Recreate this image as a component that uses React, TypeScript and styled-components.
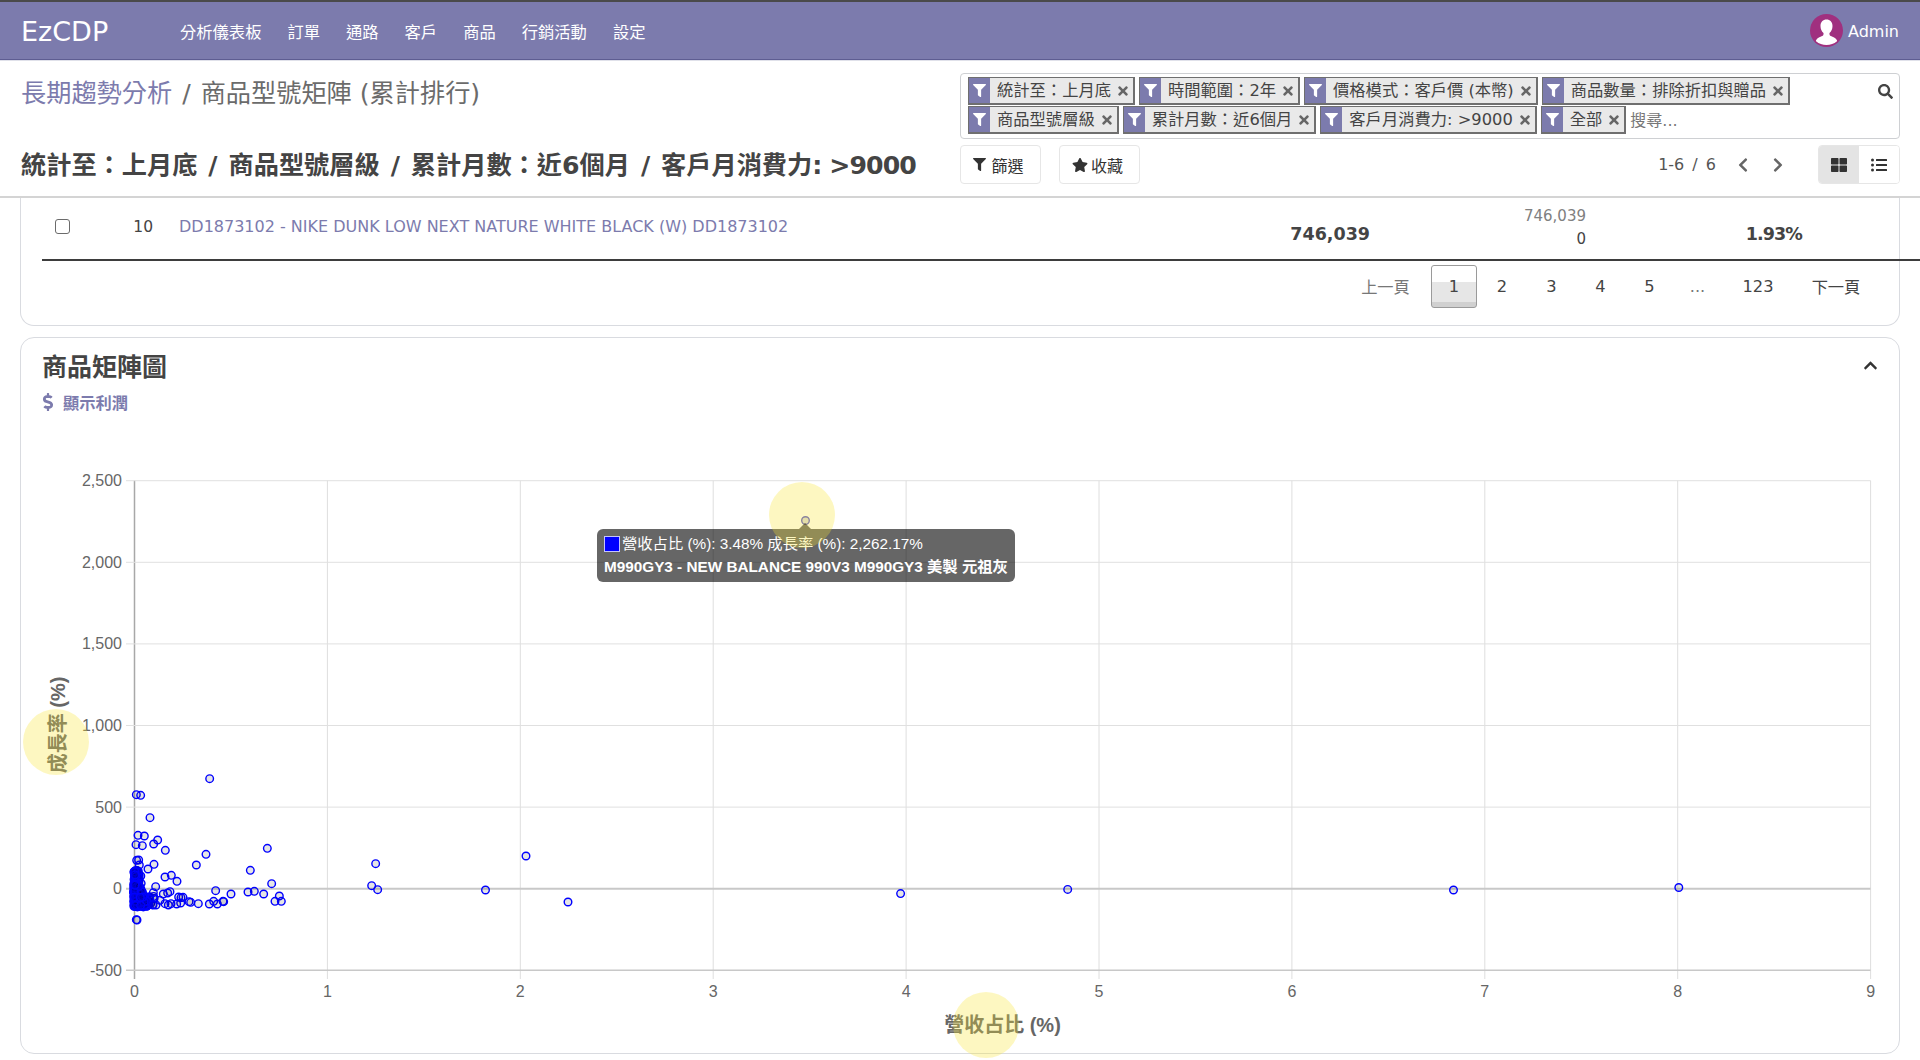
import React from "react";
import styled, { createGlobalStyle } from "styled-components";
import { FaFilter, FaTimes, FaSearch, FaStar, FaThLarge, FaListUl, FaChevronLeft, FaChevronRight, FaChevronUp, FaDollarSign } from "react-icons/fa";

const UI = `"DejaVu Sans", "Noto Sans CJK TC", sans-serif`;
const CHART = `"Liberation Sans", "Noto Sans CJK TC", sans-serif`;
const BRAND = "#7c7bad";

const Global = createGlobalStyle`
  html, body { margin: 0; padding: 0; background: #fff; }
  body { font-family: ${UI}; color: #444; }
  * { box-sizing: border-box; }
`;

const Page = styled.div`
  position: relative;
  width: 1920px;
  height: 1060px;
  overflow: hidden;
  display: flex;
  flex-direction: column;
  background: #fff;
`;

const Nav = styled.header`
  flex: none;
  height: 60px;
  display: flex;
  align-items: center;
  background: ${BRAND};
  border-top: 2px solid #4a4a4a;
  border-bottom: 1px solid #5e5d92;
  box-shadow: 0 1px 0 #e0e1ea;
  padding: 0 21px;
  color: #fff;
`;

const Brand = styled.div`
  font-size: 27px;
  line-height: 1;
  width: 159px;
  margin-top: 2px;
`;

const Menu = styled.nav`
  display: flex;
  gap: 26px;
  font-size: 16.3px;
  flex: 1;
`;

const UserBox = styled.div`
  display: flex;
  align-items: center;
  gap: 5px;
  font-size: 16px;
`;

const UserName = styled.span`
  margin-top: 2px;
`;

const Panel = styled.section`
  flex: none;
  height: 138px;
  display: grid;
  grid-template-columns: 939px 940px;
  padding: 13px 20px 0 21px;
  border-bottom: 2px solid #d4d4d4;
`;

const Heads = styled.div`
  display: flex;
  flex-direction: column;
  margin-top: 1px;
`;

const Crumbs = styled.div`
  font-size: 25.2px;
  line-height: 40px;
  color: #6b6b6b;
`;

const CrumbLink = styled.span`
  color: ${BRAND};
`;

const Sep = styled.span<{ $m: number }>`
  margin: 0 ${(p) => p.$m}px;
`;

const Title = styled.h1`
  margin: 32px 0 0;
  font-size: 25.2px;
  line-height: 40px;
  font-weight: 700;
  color: #444;
  white-space: nowrap;
`;

const TightLatin = styled.span`
  letter-spacing: -0.9px;
`;

const Controls = styled.div`
  display: flex;
  flex-direction: column;
`;

const SearchBox = styled.div`
  position: relative;
  height: 66px;
  border: 1px solid #ced0d3;
  border-radius: 4px;
  padding: 3px 7px;
  display: flex;
  flex-wrap: wrap;
  align-content: flex-start;
  gap: 1px 4px;
`;

const Facet = styled.div`
  height: 28px;
  display: flex;
  align-items: stretch;
  border: 1px solid #6f6f6f;
  border-width: 1px 2px 2px 1px;
  background: #e9e9e9;
  color: #444;
  font-size: 16.3px;
  line-height: 25px;
  white-space: nowrap;
`;

const FacetIcon = styled.span`
  width: 21px;
  display: flex;
  align-items: center;
  justify-content: center;
  background: ${BRAND};
  color: #fff;
  font-size: 13px;
`;

const FacetLabel = styled.span`
  padding: 0 5px 0 7px;
`;

const FacetClose = styled.span`
  display: flex;
  align-items: center;
  color: #666;
  font-size: 14px;
  padding-right: 3px;
`;

const SearchInput = styled.span`
  font-size: 16px;
  line-height: 30px;
  color: #777;
`;

const SearchGlyph = styled.span`
  position: absolute;
  right: 6px;
  top: 10px;
  font-size: 15px;
  color: #444;
  display: flex;
`;

const ControlRow = styled.div`
  margin-top: 6px;
  display: flex;
  align-items: center;
`;

const Button = styled.div<{ $gap: number }>`
  height: 39px;
  width: 81px;
  display: flex;
  align-items: center;
  justify-content: center;
  gap: ${(p) => p.$gap}px;
  margin-right: 18px;
  padding-right: 4px;
  border: 1px solid #e6e6e6;
  border-radius: 4px;
  font-size: 16px;
  color: #333;
`;

const Pager = styled.div`
  margin-left: auto;
  display: flex;
  align-items: center;
  font-size: 16px;
  word-spacing: 3px;
  color: #555;
  margin-right: 32px;
`;

const PagerArrow = styled.span<{ $gap: number }>`
  display: flex;
  color: #666;
  font-size: 16px;
  margin-left: ${(p) => p.$gap}px;
`;

const Toggle = styled.div`
  display: flex;
  height: 39px;
  border: 1px solid #e6e6e6;
  border-radius: 4px;
  overflow: hidden;
`;

const ToggleCell = styled.span<{ $active?: boolean }>`
  width: 40px;
  display: flex;
  align-items: center;
  justify-content: center;
  font-size: 16px;
  color: #333;
  background: ${(p) => (p.$active ? "#e4e4e4" : "#fff")};
`;

const Content = styled.main`
  flex: 1;
  min-height: 0;
  padding: 0 20px;
`;

const TableCard = styled.section`
  height: 128px;
  border: 1px solid #d9dbe0;
  border-top: 0;
  border-radius: 0 0 14px 14px;
  padding: 0 0 0 21px;
`;

const Row = styled.div`
  width: 1878px;
  height: 63px;
  display: grid;
  grid-template-columns: 70px 41px 1000px 217px 216px 216px 1fr;
  align-items: center;
  border-bottom: 2px solid #3d3d3d;
`;

const CheckCell = styled.div`
  padding-left: 13px;
  margin-top: -5px;
  display: flex;
`;

const Check = styled.span`
  width: 15px;
  height: 15px;
  border: 1px solid #6b6b6b;
  border-radius: 3px;
  background: #fff;
`;

const Rank = styled.div`
  text-align: right;
  font-size: 15.5px;
  color: #444;
  margin-top: -4px;
`;

const ProductLink = styled.div`
  padding-left: 26px;
  font-size: 16px;
  color: ${BRAND};
  margin-top: -4px;
  white-space: nowrap;
`;

const Strong = styled.div<{ $tight?: boolean }>`
  text-align: right;
  font-size: 17.5px;
  font-weight: 700;
  letter-spacing: ${(p) => (p.$tight ? "-0.9px" : "0")};
  color: #444;
  margin-top: 10px;
`;

const Stack = styled.div`
  text-align: right;
  display: flex;
  flex-direction: column;
  font-size: 15px;
  line-height: 23px;
  color: #444;
  margin-top: -2px;
`;

const Muted = styled.span`
  color: #808080;
`;

const PagerRow = styled.div`
  display: flex;
  align-items: center;
  justify-content: flex-end;
  height: 46px;
  margin-top: 2px;
  padding-right: 22px;
`;

const PageItem = styled.span<{ $w: number; $active?: boolean; $muted?: boolean }>`
  width: ${(p) => p.$w}px;
  height: 43px;
  display: flex;
  align-items: center;
  justify-content: center;
  font-size: 16.25px;
  color: ${(p) => (p.$muted ? "#777" : "#444")};
  ${(p) =>
    p.$active
      ? `border: 1px solid #9a9a9a; border-radius: 3px;
         background: linear-gradient(#fff 0, #fff 40%, #e6e6e6 40%, #e6e6e6 88%, #d0d0d0 88%);`
      : ""}
`;

const ChartCard = styled.section`
  position: relative;
  margin-top: 11px;
  height: 717px;
  border: 1px solid #d9dbe0;
  border-radius: 14px;
`;

const CardHead = styled.div`
  height: 93px;
  padding: 12px 21px 0;
  display: grid;
  grid-template-columns: 1fr auto;
  grid-template-rows: auto auto;
  align-content: start;
`;

const CardTitle = styled.h2`
  margin: 0;
  font-size: 25px;
  line-height: 36px;
  font-weight: 700;
  color: #444;
`;

const Collapse = styled.span`
  font-size: 15px;
  color: #333;
  display: flex;
  padding-top: 8px;
`;

const ProfitToggle = styled.div`
  grid-column: 1 / -1;
  display: flex;
  align-items: center;
  gap: 6px;
  margin-left: -3px;
  font-size: 16.25px;
  font-weight: 600;
  color: ${BRAND};
  margin-top: 4px;
`;

const ChartFrame = styled.div`
  position: relative;
  width: 1878px;
  height: 622px;
`;

const ChartSvg = styled.svg`
  display: block;
  width: 1878px;
  height: 622px;
  font-family: ${CHART};
`;

const Tooltip = styled.div`
  position: absolute;
  left: 576px;
  top: 98px;
  width: 418px;
  height: 53px;
  padding: 3px 7px;
  border-radius: 6px;
  background: rgba(0, 0, 0, 0.6);
  color: #fff;
  font-family: ${CHART};
  font-size: 15.3px;
  line-height: 23px;
  white-space: nowrap;
  &::before {
    content: "";
    position: absolute;
    left: 202px;
    top: -6px;
    border: 6px solid transparent;
    border-top: 0;
    border-bottom-color: rgba(0, 0, 0, 0.6);
  }
`;

const TipLine = styled.div`
  display: flex;
  align-items: center;
  gap: 2px;
`;

const TipSwatch = styled.span`
  width: 16px;
  height: 16px;
  background: #0000ff;
  border: 1px solid #c4c4ff;
`;

const TipStrong = styled.div`
  font-weight: 700;
`;

const Highlight = styled.span<{ $x: number; $y: number }>`
  position: absolute;
  left: ${(p) => p.$x - 33}px;
  top: ${(p) => p.$y - 33}px;
  width: 66px;
  height: 66px;
  border-radius: 50%;
  background: rgba(250, 230, 50, 0.3);
  pointer-events: none;
`;

const MENU = ["分析儀表板", "訂單", "通路", "客戶", "商品", "行銷活動", "設定"];
const ROW1 = ["統計至：上月底", "時間範圍：2年", "價格模式：客戶價 (本幣)", "商品數量：排除折扣與贈品"];
const ROW2 = ["商品型號層級", "累計月數：近6個月", "客戶月消費力: >9000", "全部"];

const X0 = 134.5;
const XU = 192.9;
const Y0 = 887.7;
const YU = 81.6;
const YTICKS = [2500, 2000, 1500, 1000, 500, 0, -500];
const XTICKS = [0, 1, 2, 3, 4, 5, 6, 7, 8, 9];
const yOf = (v: number) => Y0 - (v / 500) * YU;
const xOf = (v: number) => X0 + v * XU;

const ZOOM_POINTS: [number, number][] = [
  [569,53],[349,101],[362,103],[390,170],[354,223],[373,225],[348,251],[367,254],[401,249],[413,237],
  [436,268],[350,298],[356,297],[358,312],[402,310],[384,324],[558,280],[529,312],[742,262],[691,328],
  [435,348],[454,343],[471,361],[407,377],[755,368],[587,389],[684,393],[703,391],[731,399],[633,399],
  [778,405],[765,421],[784,421],[568,429],[581,421],[592,429],[609,421],[611,422],[535,428],[507,422],
  [512,424],[483,410],[476,408],[489,409],[482,426],[470,429],[450,392],[443,396],[430,399],[420,418],
  [435,428],[445,432],[453,428],[408,432],[398,431],[400,395],[1067,308],[1055,374],[1073,386],[349,476],[351,477],
];
const FAR_POINTS: [number, number][] = [
  [485.5,889],[526,855],[568,901],[900.6,892.6],[1067.7,888.4],[1453.5,889],[1678.8,886.5],
];

function cluster(): [number, number][] {
  const pts: [number, number][] = [];
  let seed = 17;
  const rnd = () => {
    seed = (seed * 1103515245 + 12345) % 2147483648;
    return seed / 2147483648;
  };
  for (let i = 0; i < 190; i++) {
    const r = rnd();
    const zy = r < 0.25 ? 325 + rnd() * 50 : 370 + rnd() * 66;
    const spread = zy < 370 ? 24 : (zy - 370) * 0.55 + 16;
    pts.push([342 + rnd() * rnd() * spread, zy]);
  }
  for (let i = 0; i < 30; i++) pts.push([345 + rnd() * 60, 405 + rnd() * 30]);
  for (let i = 0; i < 260; i++) {
    const zy = 368 + rnd() * 70;
    const reach = 14 + ((zy - 368) / 70) * 34;
    pts.push([341 + rnd() * reach, zy]);
  }
  return pts;
}

const ALL_POINTS: [number, number][] = [
  ...cluster().map(([x, y]): [number, number] => [20 + x / 3, 760 + y / 3]),
  ...ZOOM_POINTS.map(([x, y]): [number, number] => [20 + x / 3, 760 + y / 3]),
  ...FAR_POINTS,
];

function Chart() {
  return (
    <ChartSvg viewBox="21 430 1878 622">
      {XTICKS.map((t) => (
        <line key={t} x1={xOf(t)} x2={xOf(t)} y1={479.5} y2={978} stroke={t === 0 ? "#a8a8a8" : "#dedede"} strokeWidth={t === 0 ? 1.5 : 1} />
      ))}
      {YTICKS.map((t) => (
        <line
          key={t}
          x1={126}
          x2={1870.5}
          y1={yOf(t)}
          y2={yOf(t)}
          stroke={t === 0 || t === -500 ? "#c8c8c8" : "#e0e0e0"}
          strokeWidth={t === 0 ? 2 : t === -500 ? 1.5 : 1}
        />
      ))}
      {YTICKS.map((t) => (
        <text key={t} x={122} y={yOf(t) + 5.5} textAnchor="end" fontSize={16} fill="#666">
          {t.toLocaleString("en-US")}
        </text>
      ))}
      {XTICKS.map((t) => (
        <text key={t} x={xOf(t)} y={996} textAnchor="middle" fontSize={16} fill="#666">
          {t}
        </text>
      ))}
      <text x={1002.5} y={1031} textAnchor="middle" fontSize={20} fontWeight={700} fill="#666">
        營收占比 (%)
      </text>
      <text transform="translate(65 724) rotate(-90)" textAnchor="middle" fontSize={20} fontWeight={700} fill="#666">
        成長率 (%)
      </text>
      {ALL_POINTS.map(([x, y], i) => (
        <circle key={i} cx={x} cy={y} r={3.8} fill="rgba(0,0,0,0.1)" stroke="#0000ff" strokeWidth={1.4} />
      ))}
      <circle cx={805.5} cy={519.5} r={3.8} fill="#dcdcdc" stroke="#5a5acb" strokeWidth={1.4} />
    </ChartSvg>
  );
}

function Avatar() {
  return (
    <svg width="33" height="33" viewBox="0 0 33 33" aria-hidden="true">
      <circle cx="16.5" cy="16.5" r="16.5" fill="#a0307f" />
      <path d="M16.5 5.5c-3.6 0-6 2.7-6 6.4 0 3 1.2 5.6 3 7 .2 1.6-.2 2.6-1.4 3.2-2 1-4.6 1.6-5.9 3.8-.3.5-.3 1-.2 1.4a16.5 16.5 0 0 0 21 0c.1-.4.1-.9-.2-1.4-1.3-2.2-3.9-2.8-5.9-3.8-1.2-.6-1.6-1.6-1.4-3.2 1.8-1.4 3-4 3-7 0-3.7-2.4-6.4-6-6.4z" fill="#fff" />
    </svg>
  );
}

function FacetChip({ label }: { label: string }) {
  return (
    <Facet>
      <FacetIcon>
        <FaFilter />
      </FacetIcon>
      <FacetLabel>{label}</FacetLabel>
      <FacetClose>
        <FaTimes />
      </FacetClose>
    </Facet>
  );
}

export default function App() {
  return (
    <Page>
      <Global />
      <Nav>
        <Brand>EzCDP</Brand>
        <Menu>
          {MENU.map((m) => (
            <span key={m}>{m}</span>
          ))}
        </Menu>
        <UserBox>
          <Avatar />
          <UserName>Admin</UserName>
        </UserBox>
      </Nav>
      <Panel>
        <Heads>
          <Crumbs>
            <CrumbLink>長期趨勢分析</CrumbLink>
            <Sep $m={10}>/</Sep>商品型號矩陣 (累計排行)
          </Crumbs>
          <Title>
            統計至：上月底<Sep $m={11}>/</Sep>商品型號層級<Sep $m={11}>/</Sep>累計月數：近6個月<Sep $m={11}>/</Sep>客戶月消費力
            <TightLatin>: &gt;9000</TightLatin>
          </Title>
        </Heads>
        <Controls>
          <SearchBox>
            {ROW1.map((f) => (
              <FacetChip key={f} label={f} />
            ))}
            {ROW2.map((f) => (
              <FacetChip key={f} label={f} />
            ))}
            <SearchInput>搜尋...</SearchInput>
            <SearchGlyph>
              <FaSearch />
            </SearchGlyph>
          </SearchBox>
          <ControlRow>
            <Button $gap={5}>
              <FaFilter size={13} />
              篩選
            </Button>
            <Button $gap={3}>
              <FaStar size={16} />
              收藏
            </Button>
            <Pager>
              <span>1-6 / 6</span>
              <PagerArrow $gap={19}>
                <FaChevronLeft />
              </PagerArrow>
              <PagerArrow $gap={19}>
                <FaChevronRight />
              </PagerArrow>
            </Pager>
            <Toggle>
              <ToggleCell $active>
                <FaThLarge />
              </ToggleCell>
              <ToggleCell>
                <FaListUl />
              </ToggleCell>
            </Toggle>
          </ControlRow>
        </Controls>
      </Panel>
      <Content>
        <TableCard>
          <Row>
            <CheckCell>
              <Check />
            </CheckCell>
            <Rank>10</Rank>
            <ProductLink>DD1873102 - NIKE DUNK LOW NEXT NATURE WHITE BLACK (W) DD1873102</ProductLink>
            <Strong>746,039</Strong>
            <Stack>
              <Muted>746,039</Muted>
              <span>0</span>
            </Stack>
            <Strong $tight>1.93%</Strong>
          </Row>
          <PagerRow>
            <PageItem $w={91} $muted>上一頁</PageItem>
            <PageItem $w={46} $active>1</PageItem>
            <PageItem $w={50}>2</PageItem>
            <PageItem $w={49}>3</PageItem>
            <PageItem $w={49}>4</PageItem>
            <PageItem $w={49}>5</PageItem>
            <PageItem $w={47} $muted>...</PageItem>
            <PageItem $w={74}>123</PageItem>
            <PageItem $w={82}>下一頁</PageItem>
          </PagerRow>
        </TableCard>
        <ChartCard>
          <CardHead>
            <CardTitle>商品矩陣圖</CardTitle>
            <Collapse>
              <FaChevronUp />
            </Collapse>
            <ProfitToggle>
              <FaDollarSign size={18} />
              顯示利潤
            </ProfitToggle>
          </CardHead>
          <ChartFrame>
            <Chart />
            <Tooltip>
              <TipLine>
                <TipSwatch />
                營收占比 (%): 3.48% 成長率 (%): 2,262.17%
              </TipLine>
              <TipStrong>M990GY3 - NEW BALANCE 990V3 M990GY3 美製 元祖灰</TipStrong>
            </Tooltip>
          </ChartFrame>
        </ChartCard>
      </Content>
      <Highlight $x={802} $y={515} />
      <Highlight $x={56} $y={742} />
      <Highlight $x={986} $y={1025} />
    </Page>
  );
}
